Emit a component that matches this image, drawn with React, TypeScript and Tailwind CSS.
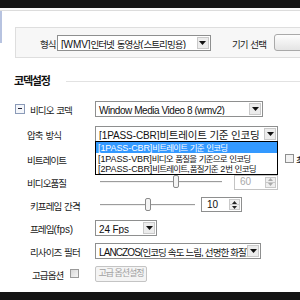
import React from "react";

const F = { fontFamily: '"Liberation Sans", "Noto Sans CJK KR", sans-serif' };

const K_LAB = "text-[9.5px] tracking-[-0.9px]";
const K_BIG = "text-[10.5px] tracking-[-0.2px]";
const K_LIST = "text-[8.5px] tracking-[-0.8px]";
const L_STD = "text-[10px] tracking-[-0.1px]";
const L_LIST = "text-[9px] tracking-[-0.1px]";
const L_NAR = "text-[10px] tracking-[-0.45px]";
const L_NAR2 = "text-[10px] tracking-[-0.9px]";

function T({ s, k, l }: { s: string; k: string; l: string }) {
  const parts = s.split(/([\uAC00-\uD7A3]+)/);
  return (
    <>
      {parts.map((p, i) =>
        p === "" ? null : (
          <span key={i} className={/[\uAC00-\uD7A3]/.test(p) ? k : l}>
            {p}
          </span>
        )
      )}
    </>
  );
}

function Arrow() {
  return (
    <div className="flex h-full w-[12px] shrink-0 items-center justify-center border border-[#c9c9c9] bg-[#ececec]">
      <svg width="7" height="4" viewBox="0 0 7 4">
        <path d="M0 0 H7 L3.5 4 Z" fill="#111" />
      </svg>
    </div>
  );
}

function Select({ w, children }: { w: string; children: React.ReactNode }) {
  return (
    <div className={`flex h-[16px] ${w} shrink-0 items-stretch border border-[#8e8f8f] bg-white p-[1px]`}>
      <div className="flex flex-1 items-center overflow-hidden whitespace-nowrap pl-[2px] leading-none text-[#111]">
        <div>{children}</div>
      </div>
      <Arrow />
    </div>
  );
}

function Spin({ w, text, disabled }: { w: string; text: string; disabled?: boolean }) {
  return (
    <div className={`flex h-[15px] ${w} items-stretch border ${disabled ? "border-[#c4c4c4]" : "border-[#8e8f8f]"} bg-white p-[1px]`}>
      <div className={`flex flex-1 items-center pl-[4px] text-[10px] leading-none ${disabled ? "text-[#a8a8a8]" : "text-[#111]"}`}>
        {text}
      </div>
      <div className="flex w-[11px] flex-col border border-[#c9c9c9] bg-[#efefef]">
        <div className="flex flex-1 items-center justify-center border-b border-[#c9c9c9]">
          <svg width="5" height="3" viewBox="0 0 5 3"><path d="M0 3 H5 L2.5 0 Z" fill={disabled ? "#aaa" : "#222"} /></svg>
        </div>
        <div className="flex flex-1 items-center justify-center">
          <svg width="5" height="3" viewBox="0 0 5 3"><path d="M0 0 H5 L2.5 3 Z" fill={disabled ? "#aaa" : "#222"} /></svg>
        </div>
      </div>
    </div>
  );
}

function Slider({ w, thumb }: { w: string; thumb: string }) {
  return (
    <div className={`relative h-[14px] ${w}`}>
      <div className="absolute left-0 right-0 top-[6px] h-[2px] border-t border-[#9c9c9c] border-b border-b-[#f0f0f0]" />
      <div className={`absolute top-0 ${thumb} h-[13px] w-[6px] rounded-[2px] border border-[#8a8a8a] bg-[#f4f4f4]`} />
    </div>
  );
}

function Label({ s, pl = "pl-[27px]" }: { s: string; pl?: string }) {
  return (
    <div className={`w-[95px] shrink-0 ${pl} whitespace-nowrap leading-none text-[#1a1a1a]`}>
      <T s={s} k={K_LAB} l={L_STD} />
    </div>
  );
}

export default function App() {
  return (
    <div className="relative flex h-[300px] w-[300px] flex-col overflow-hidden bg-white" style={F}>
      <div className="h-[8px] shrink-0 bg-[#141414]" />
      <div className="h-[3px] shrink-0 border-b border-[#dcdcdc] bg-[#fafafa]" />
      <div className="relative flex-1">
        <div className="absolute left-0 top-0 h-[32px] w-[2px] bg-[#b7c3e0]" />
        {/* format box */}
        <div className="ml-[15px] mt-[16px] flex h-[31px] w-[300px] items-center border border-[#dedede] bg-[#f7f7f7]">
          <div className="w-[49px] whitespace-nowrap pl-[24px] leading-none text-[#1a1a1a]">
            <T s="형식" k={K_LAB} l={L_STD} />
          </div>
          <Select w="w-[154px]">
            <T s="[WMV]인터넷 동영상(스트리밍용)" k={K_LAB} l={L_STD} />
          </Select>
          <div className="ml-[21px] whitespace-nowrap leading-none text-[#1a1a1a]">
            <T s="기기 선택" k={K_LAB} l={L_STD} />
          </div>
          <div className="ml-[8px] h-[17px] w-[40px] shrink-0 rounded-[3px] border border-[#a9a9a9] bg-gradient-to-b from-[#fdfdfd] to-[#e4e4e4]" />
        </div>

        {/* heading */}
        <div className="mt-[18px] flex items-center">
          <div className="whitespace-nowrap pl-[14px] text-[11px] font-bold leading-none tracking-[-1.2px] text-[#111]">코덱설정</div>
          <div className="ml-[16px] h-px flex-1 bg-[#e2e2e2]" />
        </div>

        {/* rows */}
        <div className="mt-[9px] flex flex-col">
          <div className="flex h-[25px] items-center">
            <div className="flex w-[95px] shrink-0 items-center pl-[15px]">
              <div className="flex h-[10px] w-[10px] items-center justify-center border border-[#8b9bb8] bg-[#f4f6fa]">
                <div className="h-px w-[4px] bg-[#223]" />
              </div>
              <span className="ml-[5px] whitespace-nowrap leading-none text-[#1a1a1a]">
                <T s="비디오 코덱" k={K_LAB} l={L_STD} />
              </span>
            </div>
            <Select w="w-[168px]">
              <T s="Window Media Video 8 (wmv2)" k={K_LAB} l={L_NAR} />
            </Select>
          </div>

          <div className="relative flex h-[25px] items-center">
            <Label s="압축 방식" />
            <Select w="w-[183px]">
              <T s="[1PASS-CBR]비트레이트 기준 인코딩" k={K_BIG} l={L_STD} />
            </Select>
            <div className="absolute left-[95px] top-[20px] z-10 flex w-[183px] flex-col border border-[#000] bg-white leading-[8.6px] text-[#111]">
              <div className="whitespace-nowrap bg-[#3399ff] pl-[2px] text-white">
                <T s="[1PASS-CBR]비트레이트 기준 인코딩" k={K_LIST} l={L_LIST} />
              </div>
              <div className="whitespace-nowrap pl-[2px]">
                <T s="[1PASS-VBR]비디오 품질을 기준으로 인코딩" k={K_LIST} l={L_LIST} />
              </div>
              <div className="whitespace-nowrap pl-[2px]">
                <T s="[2PASS-CBR]비트레이트,품질기준 2번 인코딩" k={K_LIST} l={L_LIST} />
              </div>
            </div>
          </div>

          <div className="flex h-[25px] items-center">
            <Label s="비트레이트" />
            <div className="ml-[190px] h-[9px] w-[9px] shrink-0 border border-[#8e8f8f] bg-[#f2f2f2]" />
            <span className="ml-[2px] whitespace-nowrap leading-none text-[#1a1a1a]">
              <T s="최" k={K_LAB} l={L_STD} />
            </span>
          </div>

          <div className="flex h-[22px] items-center">
            <Label s="비디오품질" />
            <div className="ml-[5px]">
              <Slider w="w-[122px]" thumb="left-[73px]" />
            </div>
            <div className="ml-[12px]">
              <Spin w="w-[44px]" text="60" disabled />
            </div>
          </div>

          <div className="flex h-[23px] items-center">
            <Label s="키프레임 간격" pl="pl-[30px]" />
            <div className="ml-[5px]">
              <Slider w="w-[95px]" thumb="left-[45px]" />
            </div>
            <div className="ml-[6px]">
              <Spin w="w-[41px]" text="10" />
            </div>
          </div>

          <div className="flex h-[23px] items-center">
            <Label s="프레임(fps)" pl="pl-[30px]" />
            <Select w="w-[62px]">
              <T s="24 Fps" k={K_LAB} l={L_STD} />
            </Select>
          </div>

          <div className="flex h-[23px] items-center">
            <Label s="리사이즈 필터" pl="pl-[30px]" />
            <Select w="w-[166px]">
              <T s="LANCZOS(인코딩 속도 느림, 선명한 화질)" k={K_LAB} l={L_NAR2} />
            </Select>
          </div>

          <div className="flex h-[23px] items-center">
            <div className="flex w-[95px] shrink-0 items-center pl-[32px]">
              <span className="whitespace-nowrap leading-none text-[#1a1a1a]">
                <T s="고급옵션" k={K_LAB} l={L_STD} />
              </span>
              <div className="ml-[7px] h-[9px] w-[9px] border border-[#9a9a9a] bg-gradient-to-br from-[#d8d8d8] to-[#f6f6f6]" />
            </div>
            <div className="flex h-[16px] w-[52px] items-center justify-center whitespace-nowrap rounded-[2px] border border-[#c4c4c4] bg-[#f4f4f4] text-[9px] leading-none tracking-[-1px] text-[#a0a0a0]">
              고급 옵션설정
            </div>
          </div>
        </div>
      </div>
      <div className="h-[8px] shrink-0 bg-[#141414]" />
    </div>
  );
}
